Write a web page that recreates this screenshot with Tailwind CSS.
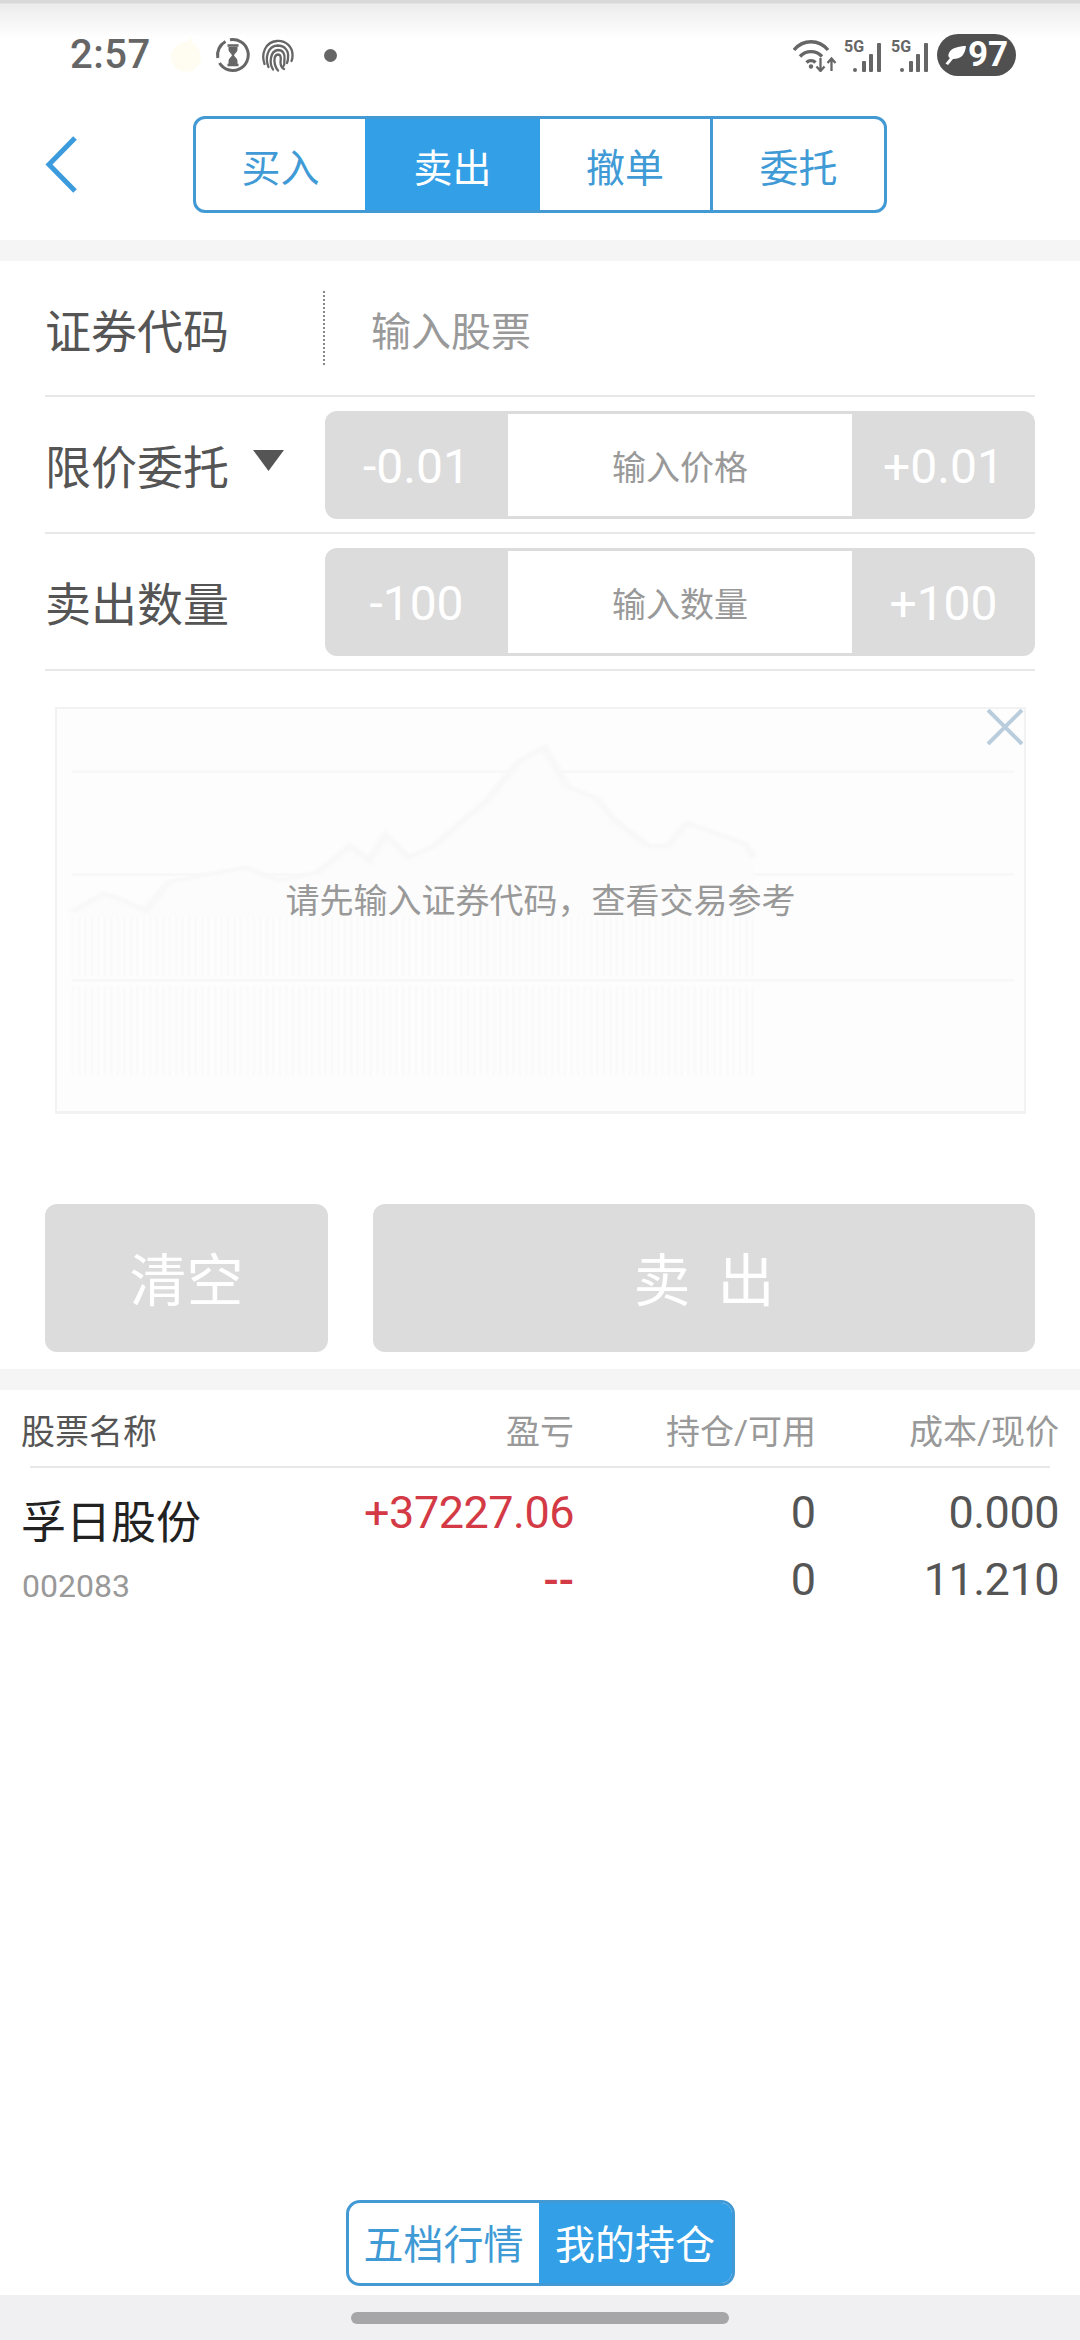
<!DOCTYPE html>
<html lang="zh-CN">
<head>
<meta charset="utf-8">
<title>卖出</title>
<script src="https://cdn.jsdelivr.net/npm/@tailwindcss/browser@4"></script>
</head>
<body class="m-0 bg-white">
<div class="w-[1080px] h-[2340px] flex flex-col bg-white overflow-hidden font-['Roboto','Noto_Sans_CJK_SC',sans-serif]">

  <!-- Header -->
  <header class="h-[240px] shrink-0 flex flex-col bg-[linear-gradient(#d9d9d9_0,#d9d9d9_3px,#ececec_4px,#ffffff_38px)]">
    <div class="h-[116px] shrink-0 pt-[34px] pl-[70px] pr-[64px] flex items-start justify-between">
      <div class="flex items-center h-[42px]">
        <span class="text-[40px] leading-[42px] font-medium text-[#666] w-[79px] tracking-[0.5px]">2:57</span>
        <svg class="ml-[21px] w-[32px] h-[36px]" viewBox="0 0 32 36"><circle cx="16" cy="20" r="15" fill="#fffdf1"/><path d="M17 6 C18 2 21 1 23 1 C23 4 21 6 17 6Z" fill="#fffdf1"/></svg>
        <svg class="ml-[13px] w-[36px] h-[36px]" viewBox="0 0 36 36" fill="none"><path d="M15 2.700 A15.500 15.500 0 1 1 4.500 26" stroke="#666" stroke-width="3"/><path d="M2.800 21 A15.500 15.500 0 0 1 10.500 4.500" stroke="#666" stroke-width="3"/><path d="M12.500 8.500h11M12.500 28h11" stroke="#666" stroke-width="2.500"/><path d="M13.500 10h9v2.500c0 2.500-2.500 3.500-3.500 5.700 1 2.200 3.500 3.200 3.500 5.800v3h-9v-3c0-2.600 2.500-3.600 3.500-5.800-1-2.200-3.500-3.200-3.500-5.700z" fill="#666"/></svg>
        <svg class="ml-[10px] w-[33px] h-[33px]" viewBox="0 0 33 33" fill="none" stroke="#666" stroke-width="2.300" stroke-linecap="round"><path d="M3.500 25 C0 15 4 3 16 2 C25 1.500 32 8 31.500 17 C31.500 19 31 21 30.500 22"/><path d="M7.500 28 C4 20 6 7 16.500 6.500 C24 6.500 28 12 27 19 C27 21 26.500 23 26 24"/><path d="M12 30.500 C8 24 9 12 17 11 C22 11 24 15 23.500 20 C23 24 24 26 22.500 27"/><path d="M17 31.500 C12.500 26 12 16 17 15.500 C20 15.500 20 19 19.500 23 C19.500 26 21 29 23 30"/></svg>
        <span class="ml-[30px] w-[13px] h-[13px] rounded-full bg-[#666]"></span>
      </div>
      <div class="flex items-center h-[42px]">
        <svg class="w-[44px] h-[33px]" viewBox="0 0 44 33" fill="none" stroke="#666" stroke-width="3.400"><path d="M1 11 C10 0 26 0 35 11"/><path d="M7 17.500 C13 11 23 11 29 17.500"/><path d="M13.500 23.500 C16 21 20 21 22.500 23.500"/><circle cx="18" cy="27.500" r="2.200" fill="#666" stroke="none"/><path d="M27.500 19v13M23.500 27.500l4 4.500 4-4.500M38.500 32V19.500M34.500 24l4-4.500 4 4.500" stroke-width="2.300"/></svg>
        <span class="ml-[7px] relative w-[37px] h-[33px]">
          <span class="absolute left-0 top-[1px] text-[16px] leading-[14px] font-bold text-[#666]">5G</span>
          <svg class="absolute left-[9px] top-[4px] w-[28px] h-[29px]" viewBox="0 0 28 29" fill="#666"><circle cx="2" cy="27" r="2"/><rect x="9" y="18" width="4" height="11" rx="1"/><rect x="16" y="11" width="4" height="18" rx="1"/><rect x="24" y="0" width="4" height="29" rx="1"/></svg>
        </span>
        <span class="ml-[10px] relative w-[37px] h-[33px]">
          <span class="absolute left-0 top-[1px] text-[16px] leading-[14px] font-bold text-[#666]">5G</span>
          <svg class="absolute left-[9px] top-[4px] w-[28px] h-[29px]" viewBox="0 0 28 29" fill="#666"><circle cx="2" cy="27" r="2"/><rect x="9" y="18" width="4" height="11" rx="1"/><rect x="16" y="11" width="4" height="18" rx="1"/><rect x="24" y="0" width="4" height="29" rx="1"/></svg>
        </span>
        <div class="ml-[9px] w-[79px] h-[42px] rounded-[21px] bg-[#505050] flex items-center pl-[8px]">
          <svg class="w-[21px] h-[19px]" viewBox="0 0 21 19" fill="#fff"><path d="M21 0 C20 9 16 13 8 13 L3 19 L0.500 17.500 L5 12 C3 11.500 3 9 4 7 C6 2 14 0 21 0Z"/></svg>
          <span class="text-[35px] leading-[38px] font-bold text-white ml-[2px]">97</span>
        </div>
      </div>
    </div>
    <nav class="flex items-center h-[97px] pl-[45px]">
      <svg class="w-[33px] h-[57px]" viewBox="0 0 33 57" fill="none" stroke="#3b9bdc" stroke-width="5"><path d="M30 2 L4 28.500 L30 55"/></svg>
      <div class="ml-[115px] w-[694px] h-[97px] border-[3px] border-[#4399d4] rounded-[12px] overflow-hidden grid grid-cols-[169px_175px_173px_1fr] text-[39px] text-[#3f9ad6]">
        <div class="flex items-center justify-center pt-[9px]">买入</div>
        <div class="flex items-center justify-center pt-[9px] bg-[#339fe6] text-white">卖出</div>
        <div class="flex items-center justify-center pt-[9px] border-r-[3px] border-[#4399d4]">撤单</div>
        <div class="flex items-center justify-center pt-[9px]">委托</div>
      </div>
    </nav>
  </header>

  <div class="h-[21px] shrink-0 bg-[#f5f5f5]"></div>

  <!-- Form -->
  <section class="h-[1108px] shrink-0 px-[45px] flex flex-col">
    <div class="h-[136px] shrink-0 border-b-2 border-[#e8e8e8] flex items-center">
      <span class="w-[278px] pt-[8px] text-[46px] text-[#555]">证券代码</span>
      <span class="h-[74px] border-l-2 border-dotted border-[#888]"></span>
      <span class="ml-[46px] pt-[10px] text-[40px] text-[#999]">输入股票</span>
    </div>
    <div class="h-[137px] shrink-0 border-b-2 border-[#e8e8e8] flex items-center">
      <span class="w-[208px] pt-[8px] text-[46px] text-[#555]">限价委托</span>
      <svg class="w-[31px] h-[21px] mt-[-8px]" viewBox="0 0 31 21"><path d="M0 0H31L15.500 21Z" fill="#555"/></svg>
      <div class="ml-[41px] w-[710px] h-[108px] rounded-[12px] bg-[#dcdcdc] flex items-center">
        <span class="w-[183px] pt-[4px] text-center text-[48px] text-white">-0.01</span>
        <span class="w-[344px] h-[102px] pt-[8px] bg-white flex items-center justify-center text-[34px] text-[#999]">输入价格</span>
        <span class="w-[183px] pt-[4px] text-center text-[48px] text-white">+0.01</span>
      </div>
    </div>
    <div class="h-[137px] shrink-0 border-b-2 border-[#e8e8e8] flex items-center">
      <span class="w-[280px] pt-[8px] text-[46px] text-[#555]">卖出数量</span>
      <div class="w-[710px] h-[108px] rounded-[12px] bg-[#dcdcdc] flex items-center">
        <span class="w-[183px] pt-[4px] text-center text-[48px] text-white">-100</span>
        <span class="w-[344px] h-[102px] pt-[8px] bg-white flex items-center justify-center text-[34px] text-[#999]">输入数量</span>
        <span class="w-[183px] pt-[4px] text-center text-[48px] text-white">+100</span>
      </div>
    </div>

    <div class="relative mt-[36px] ml-[10px] w-[971px] h-[407px] shrink-0 border-2 border-[#f2f2f2] border-b-[3px] bg-[#fdfdfd] flex items-center justify-center">
      <svg class="absolute inset-0 w-full h-full" viewBox="38 50 1492 1218" preserveAspectRatio="none">
        <defs>
          <pattern id="bars" width="10" height="10" patternUnits="userSpaceOnUse"><rect width="4" height="10" fill="#fafafa"/></pattern>
          <filter id="soft"><feGaussianBlur stdDeviation="3"/></filter>
        </defs>
        <path d="M60 240H1515M60 552H1515M60 872H1515" stroke="#f8f8f8" stroke-width="8" fill="none"/>
        <g filter="url(#soft)">
          <path d="M60 665L110 610L135 625L175 660L210 575L260 555L330 530L380 570L440 545L490 465L520 510L545 430L580 500L620 465L660 395L700 330L750 210L790 165L825 285L870 320L900 390L950 465L980 465L1010 395L1060 430L1100 460L1113 500V680H60Z" fill="#fcfcfc"/>
          <path d="M60 665L110 610L135 625L175 660L210 575L260 555L330 530L380 570L440 545L490 465L520 510L545 430L580 500L620 465L660 395L700 330L750 210L790 165L825 285L870 320L900 390L950 465L980 465L1010 395L1060 430L1100 460L1113 500" fill="none" stroke="#f8f8f8" stroke-width="12"/>
        </g>
        <rect x="60" y="680" width="1053" height="180" fill="url(#bars)"/>
        <rect x="60" y="890" width="1053" height="270" fill="url(#bars)"/>
      </svg>
      <span class="relative mt-[-17px] text-[34px] text-[#999]">请先输入证券代码，查看交易参考</span>
      <svg class="absolute right-0 top-0 w-[38px] h-[36px]" viewBox="0 0 38 36" fill="none" stroke="#b9cddd" stroke-width="4"><path d="M2 1L36 35M36 1L2 35"/></svg>
    </div>

    <div class="mt-[90px] flex gap-[45px] h-[148px] shrink-0">
      <div class="w-[283px] pt-[8px] rounded-[12px] bg-[#dcdcdc] flex items-center justify-center text-[57px] text-white">清空</div>
      <div class="w-[662px] pt-[8px] rounded-[12px] bg-[#dcdcdc] flex items-center justify-center text-[57px] text-white [word-spacing:13px]">卖 出</div>
    </div>
  </section>

  <div class="h-[21px] shrink-0 bg-[#f5f5f5]"></div>

  <!-- Holdings -->
  <section class="flex-1 flex flex-col min-h-0">
    <div class="mx-[30px] h-[78px] shrink-0 border-b-2 border-[#e8e8e8] text-[34px] text-[#999] grid grid-cols-[314px_230px_242px_243px]">
      <span class="text-[#555] ml-[-9px] pt-[17px] whitespace-nowrap">股票名称</span>
      <span class="text-right pt-[17px]">盈亏</span>
      <span class="text-right pt-[17px]">持仓/可用</span>
      <span class="text-right pt-[17px]">成本/现价</span>
    </div>
    <div class="pl-[21px] grid grid-cols-[323px_230px_242px_243px] text-[45px] leading-[50px] text-[#555]">
      <div class="flex flex-col">
        <span class="mt-[24px] text-[45px] leading-[64px] text-[#222] whitespace-nowrap">孚日股份</span>
        <span class="mt-[10px] ml-[1px] text-[32px] leading-[40px] text-[#999]">002083</span>
      </div>
      <div class="flex flex-col text-right text-[#d33a45] pt-[20px] gap-[17px]">
        <span class="tracking-[-0.5px]">+37227.06</span>
        <span class="font-medium">--</span>
      </div>
      <div class="flex flex-col text-right pt-[20px] gap-[17px]">
        <span>0</span>
        <span>0</span>
      </div>
      <div class="flex flex-col text-right pt-[20px] gap-[17px] tracking-[-0.5px]">
        <span>0.000</span>
        <span>11.210</span>
      </div>
    </div>
    <div class="mt-auto mb-[9px] self-center w-[389px] h-[86px] border-[3px] border-[#4399d4] rounded-[14px] overflow-hidden grid grid-cols-[190px_1fr] text-[40px]">
      <div class="flex items-center justify-center pt-[6px] text-[#3f9ad6]">五档行情</div>
      <div class="flex items-center justify-center pt-[6px] bg-[#339fe6] text-white">我的持仓</div>
    </div>
  </section>

  <!-- Gesture bar -->
  <footer class="h-[45px] shrink-0 bg-[#f0f0f2] flex justify-center pt-[17px]">
    <div class="w-[378px] h-[12px] rounded-full bg-[#a6a6a8]"></div>
  </footer>
</div>
</body>
</html>
